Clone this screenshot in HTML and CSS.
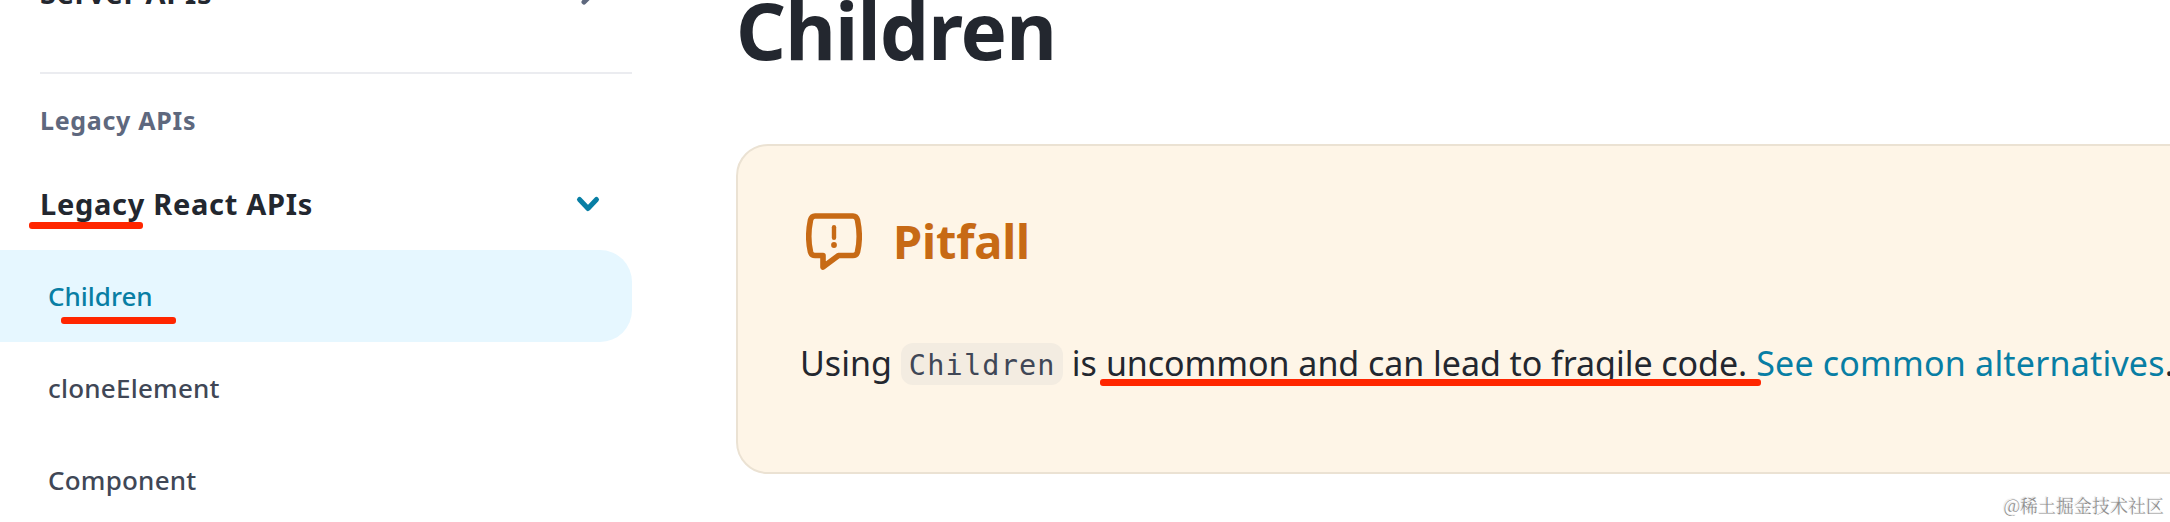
FILE: index.html
```html
<!DOCTYPE html>
<html lang="en">
<head>
<meta charset="utf-8">
<title>Children – React</title>
<link rel="stylesheet" href="styles.css">
</head>
<body>
<div class="page">
  <nav class="sidebar">
    <a class="group group-cut"><span class="server">Server APIs</span>
      <svg class="chevron muted" viewBox="0 0 28 28"><path d="M10 5l9 9-9 9"/></svg>
    </a>
    <hr class="divider">
    <h3 class="section">Legacy APIs</h3>
    <a class="group"><span class="legacy">Legacy React APIs<i class="mark mark-legacy"></i></span>
      <svg class="chevron accent" viewBox="0 0 28 28"><path d="M5.500 9.500l8.500 9 8.500-9"/></svg>
    </a>
    <ul class="links">
      <li class="link active"><span class="l-children">Children<i class="mark mark-children"></i></span></li>
      <li class="link"><span class="l-clone">cloneElement</span></li>
      <li class="link"><span class="l-component">Component</span></li>
    </ul>
  </nav>
  <main class="content">
    <h1 class="title">Children</h1>
    <section class="callout">
      <h2 class="callout-head">
        <svg class="callout-icon" viewBox="0 0 56 58"><path d="M9 3H47Q50.400 3 51.500 7Q55 24 51.500 39Q50.400 42.500 47 42.500H32.500L17 54V42.500H9Q5.600 42.500 4.500 39Q1 24 4.500 7Q5.600 3 9 3Z"/><path class="bar" d="M28 14.200v10.600"/><circle cx="28" cy="32" r="2.900"/></svg>
        <span class="callout-title">Pitfall</span>
      </h2>
      <p class="callout-text"><span class="using">Using</span><code class="code">Children</code><span class="is">is</span><span class="marked">uncommon and can lead to fragile code.<i class="mark mark-text"></i></span><a class="alt">See common alternatives</a><span>.</span></p>
    </section>
    <div class="watermark">@稀土掘金技术社区</div>
  </main>
</div>
</body>
</html>
```
FILE: styles.css
```css
* { box-sizing: border-box; }
body { margin: 0; background: #fff; color: #23272f; font-family: "Noto Sans", sans-serif; }
.page { display: flex; width: 2170px; height: 522px; overflow: hidden; }
h1, h2, h3, p, ul { margin: 0; padding: 0; list-style: none; }

.sidebar { width: 632px; flex: none; margin-top: -49px; }
.group { display: flex; align-items: center; justify-content: space-between; height: 76px; padding: 0 30px 0 40px; font-size: 29px; font-weight: 700; letter-spacing: 0.7px; }
.group > span { padding-bottom: 2px; }
.group-cut { height: 84px; }
.chevron { width: 28px; height: 28px; fill: none; stroke-width: 5; stroke-linecap: round; stroke-linejoin: round; }
.muted { stroke: #5e687e; }
.accent { stroke: #087ea4; }
.divider { height: 2px; margin: 37px 0 0 40px; border: 0; background: #ebecf0; }
.section { height: 92px; padding-left: 40px; line-height: 92px; font-size: 25px; font-weight: 700; letter-spacing: 0.7px; color: #5e687e; }
.links { padding-top: 8px; }
.link { height: 92px; padding-left: 48px; line-height: 92px; font-size: 26px; font-weight: 500; color: #404756; }
.l-clone, .l-component { letter-spacing: 0.22px; }
.active { background: #e6f7ff; color: #087ea4; border-radius: 0 32px 32px 0; }

.legacy, .l-children, .marked { position: relative; }
.mark { position: absolute; height: 7px; border-radius: 3px; background: #ff2600; }
.mark-legacy { left: -11px; top: 38px; width: 114px; }
.mark-children { left: 13px; top: 39px; width: 115px; }
.mark-text { left: -6px; top: 39px; width: 661px; }

.content { flex: 1; min-width: 0; padding-left: 104px; }
.title { height: 144px; padding-left: 0; line-height: 60px; font-size: 78px; font-weight: 700; letter-spacing: -0.9px; }
.callout { width: 1500px; height: 330px; padding: 64px 62px 0; border: 2px solid #ebe2d3; border-radius: 32px; background: #fef5e7; }
.callout-head { display: flex; align-items: center; gap: 31px; height: 64px; font-size: 47px; font-weight: 700; line-height: 64px; color: #c76a15; }
.callout-title { padding-bottom: 3px; letter-spacing: -0.15px; }
.callout-icon { width: 56px; height: 58px; margin-left: 6px; fill: none; stroke: currentColor; stroke-width: 5.6; stroke-linejoin: round; stroke-linecap: round; }
.callout-icon .bar { stroke-width: 4.4; }
.callout-icon circle { fill: currentColor; stroke: none; }
.callout-text { display: flex; align-items: center; height: 62px; margin-top: 58px; font-size: 34px; white-space: nowrap; }
.callout-text > * { flex: none; }
.code { width: 162px; height: 42px; margin: 2px 9px 0 9px; padding-left: 8px; line-height: 45px; border-radius: 12px; background: #f3ece1; color: #404756; font-family: "DejaVu Sans Mono", monospace; font-size: 28.5px; letter-spacing: 1.2px; }
.is { margin-right: 9px; }
.marked { letter-spacing: -0.05px; }
.alt { margin-left: 9px; letter-spacing: 0.2px; color: #087ea4; }
.watermark { padding: 17px 6px 0 0; text-align: right; font: 300 18px/28px "Noto Serif CJK SC", "Noto Sans CJK SC", serif; color: #8c8c8c; text-shadow: -1px -1px 1px #ddd; }
```
